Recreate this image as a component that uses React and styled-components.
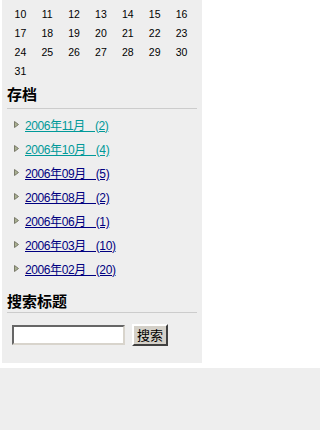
import React from "react";
import styled, { createGlobalStyle } from "styled-components";

const GlobalStyle = createGlobalStyle`
  html, body { margin: 0; padding: 0; background: #ffffff; }
  body { font-family: "Liberation Sans", "Noto Sans CJK SC", sans-serif; }
`;

const Sidebar = styled.div`
  margin-left: 2px;
  width: 190px;
  background: #eeeeee;
  padding: 4px 5px 17px 5px;
`;

const Calendar = styled.table`
  width: 188px;
  border-collapse: collapse;
  font-family: "Liberation Sans", sans-serif;
  font-size: 10.5px;
  color: #000;
`;

const Day = styled.td`
  height: 19px;
  padding: 0;
  text-align: center;
  vertical-align: middle;
`;

const Heading = styled.h2`
  margin: ${(p) => p.$top}px 0 0 0;
  font-family: "Noto Sans CJK SC", sans-serif;
  font-size: 15px;
  font-weight: 700;
  line-height: 20px;
  color: #000;
  padding-bottom: ${(p) => p.$pad}px;
  border-bottom: 1px solid #cccccc;
`;

const ArchiveList = styled.ul`
  list-style: none;
  margin: 0;
  padding: 3px 0 0 0;
`;

const ArchiveItem = styled.li`
  display: flex;
  align-items: center;
  height: 24px;
  padding-left: 7px;
  gap: 6px;
`;

const ArchiveLink = styled.a`
  font-family: "Liberation Sans", "Noto Sans CJK SC", sans-serif;
  font-size: 12px;
  letter-spacing: -0.4px;
  word-spacing: 7px;
  color: ${(p) => (p.$visited ? "#009999" : "#000080")};
  text-decoration: underline;
  white-space: nowrap;
`;

const SearchForm = styled.form`
  display: flex;
  align-items: center;
  gap: 7px;
  margin: 11px 0 0 5px;
`;

const SearchInput = styled.input`
  box-sizing: border-box;
  width: 113px;
  height: 20px;
  margin: 0;
  padding: 1px 2px;
  background: #fff;
  border: 2px solid;
  border-color: #666666 #d8d4cc #d8d4cc #666666;
`;

const SearchButton = styled.button`
  box-sizing: border-box;
  width: 36px;
  height: 22px;
  margin: 0;
  padding: 0;
  background: #d4d0c8;
  border: 2px solid;
  border-color: #ffffff #404040 #404040 #ffffff;
  font-family: "Noto Sans CJK SC", sans-serif;
  font-size: 13px;
  color: #000;
  line-height: 16px;
`;

const Footer = styled.div`
  margin-top: 5px;
  height: 64px;
  background: #eeeeee;
`;

const Bullet = () => (
  <svg width="5" height="7" viewBox="0 0 5 7">
    <path d="M0.5 0.5 L4.5 3.5 L0.5 6.5 Z" fill="#a8b090" stroke="#7a7a6a" strokeWidth="1" />
  </svg>
);

const weeks = [
  [10, 11, 12, 13, 14, 15, 16],
  [17, 18, 19, 20, 21, 22, 23],
  [24, 25, 26, 27, 28, 29, 30],
  [31, "", "", "", "", "", ""],
];

const archives = [
  { label: "2006年11月 (2)", visited: true },
  { label: "2006年10月 (4)", visited: true },
  { label: "2006年09月 (5)" },
  { label: "2006年08月 (2)" },
  { label: "2006年06月 (1)" },
  { label: "2006年03月 (10)" },
  { label: "2006年02月 (20)" },
];

export default function App() {
  return (
    <>
      <GlobalStyle />
      <Sidebar>
        <Calendar>
          <tbody>
            {weeks.map((w, i) => (
              <tr key={i}>
                {w.map((d, j) => (
                  <Day key={j}>{d}</Day>
                ))}
              </tr>
            ))}
          </tbody>
        </Calendar>
        <Heading $top={4} $pad={4}>存档</Heading>
        <ArchiveList>
          {archives.map((a) => (
            <ArchiveItem key={a.label}>
              <Bullet />
              <ArchiveLink href="#" $visited={a.visited}>{a.label}</ArchiveLink>
            </ArchiveItem>
          ))}
        </ArchiveList>
        <Heading $top={11} $pad={1}>搜索标题</Heading>
        <SearchForm onSubmit={(e) => e.preventDefault()}>
          <SearchInput type="text" />
          <SearchButton type="submit">搜索</SearchButton>
        </SearchForm>
      </Sidebar>
      <Footer />
    </>
  );
}
